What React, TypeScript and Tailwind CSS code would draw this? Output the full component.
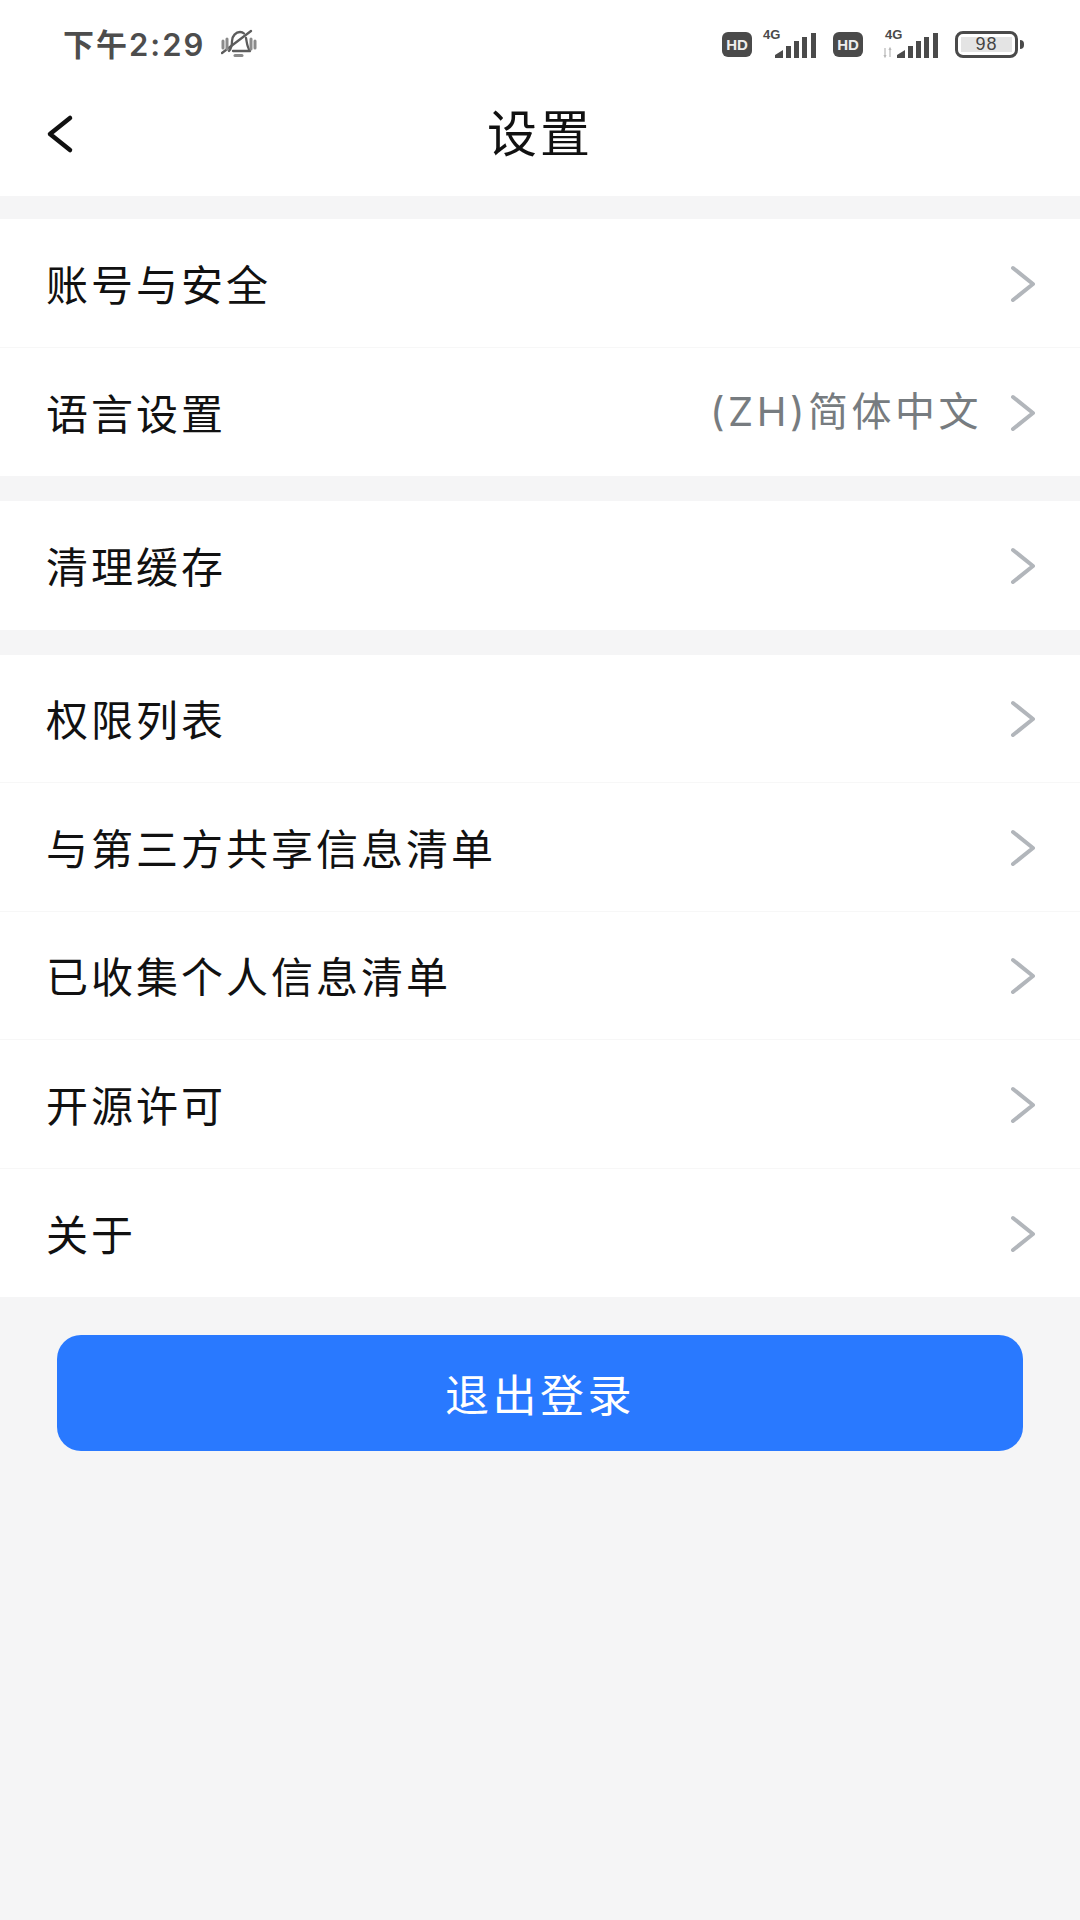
import React from "react";

const FONT = "font-['Noto_Sans_CJK_SC','Noto_Sans',sans-serif]";

interface RowItem {
  label: string;
  value?: string;
}

const sections: RowItem[][] = [
  [{ label: "账号与安全" }, { label: "语言设置", value: "(ZH)简体中文" }],
  [{ label: "清理缓存" }],
  [
    { label: "权限列表" },
    { label: "与第三方共享信息清单" },
    { label: "已收集个人信息清单" },
    { label: "开源许可" },
    { label: "关于" },
  ],
];

function HdBadge() {
  return (
    <span className="flex h-[25px] w-[30px] items-center justify-center rounded-[6px] bg-[#4a4a4a] font-['Liberation_Sans',sans-serif] text-[15px] leading-none font-bold text-[#eeeeee]">
      HD
    </span>
  );
}

function Signal({ arrows }: { arrows?: boolean }) {
  return (
    <svg width="56" height="30" viewBox="0 0 56 30" className="overflow-visible">
      <text x="1" y="10" fontSize="13" fontWeight="700" fill="#4a4a4a" fontFamily="Liberation Sans, sans-serif">
        4G
      </text>
      {arrows && <path d="M1 19v9M0 26l1 2 1-2M6 28v-9M5 21l1-2 1 2" fill="none" stroke="#b8b8b8" strokeWidth="1.200" />}
      <path d="M13 29v-3l8-5v8zM24 29V17h5v12zM32 29V12h5v17zM40 29V8h5v21zM49 29V4h5v25z" fill="#4a4a4a" />
    </svg>
  );
}

function Battery() {
  return (
    <div className="flex items-center gap-[2px]">
      <div className="flex h-[27px] w-[63px] items-center justify-center rounded-[8px] border-[3px] border-[#4a4a4a] p-[3px]">
        <span className="flex h-full w-full items-center justify-center bg-[#e4e4e4] font-['Liberation_Sans',sans-serif] text-[18px] leading-none tracking-[1px] text-[#444444]">
          98
        </span>
      </div>
      <span className="h-[9px] w-[4px] rounded-r-sm bg-[#4a4a4a]" />
    </div>
  );
}

function MuteBell() {
  return (
    <svg width="36" height="30" viewBox="0 0 36 30" fill="none" stroke="#5c5c5c" strokeWidth="2.300" strokeLinecap="round" strokeLinejoin="round">
      <path d="M8 22c3-3 3-6 3-10 0-5 4-9 8-9 2 0 3 .5 4 1.500" />
      <path d="M25 9c1 5 1 9 4 13H12" />
      <path d="M1 24 30 2" />
      <path d="M14 26.500h7" strokeWidth="3" stroke="#8a8a8a" />
      <path d="M2 12v7M6 10v10M30 10v10M34 12v7" strokeWidth="3" stroke="#8a8a8a" />
    </svg>
  );
}

function StatusBar() {
  return (
    <div className="flex h-[88px] items-center justify-between pr-[56px] pl-[63px]">
      <div className="flex items-center gap-[16px]">
        <span className="font-['Inter','Noto_Sans_CJK_SC',sans-serif] text-[31px] leading-none font-semibold tracking-[2px] text-[#4d4d4d]">
          下午2:29
        </span>
        <MuteBell />
      </div>
      <div className="flex items-center">
        <HdBadge />
        <span className="ml-[10px] flex">
          <Signal />
        </span>
        <span className="ml-[15px] flex">
          <HdBadge />
        </span>
        <span className="ml-[21px] flex">
          <Signal arrows />
        </span>
        <span className="ml-[15px] flex">
          <Battery />
        </span>
      </div>
    </div>
  );
}

function Chevron() {
  return (
    <svg width="26" height="38" viewBox="0 0 26 38" fill="none" className="shrink-0">
      <path d="M3 4 23 20 3 36" stroke="#b2b6bb" strokeWidth="4" strokeLinecap="round" strokeLinejoin="round" />
    </svg>
  );
}

function Row({ item, last }: { item: RowItem; last: boolean }) {
  return (
    <div className={`flex h-[128.500px] items-center justify-between pr-[44px] pl-[46px] ${last ? "" : "border-b border-[#f7f7f7]"}`}>
      <span className="text-[42px] leading-none tracking-[3px] text-[#111111]">{item.label}</span>
      <div className="flex items-center gap-[28px]">
        {item.value && (
          <span className="font-['Inter','Noto_Sans_CJK_SC',sans-serif] text-[40px] leading-none tracking-[3.500px] text-[#777c80]">
            {item.value}
          </span>
        )}
        <Chevron />
      </div>
    </div>
  );
}

export default function App() {
  return (
    <div className={`flex h-[1920px] w-[1080px] flex-col bg-[#f5f5f6] ${FONT}`}>
      <header className="h-[196px] bg-white">
        <StatusBar />
        <div className="relative flex h-[90px] items-center justify-center pb-[6px]">
          <svg width="30" height="40" viewBox="0 0 30 40" fill="none" className="absolute top-[26px] left-[45px]">
            <path d="M25 4 5 20l20 16" stroke="#111111" strokeWidth="4.500" strokeLinecap="round" strokeLinejoin="round" />
          </svg>
          <span className="text-[50px] leading-none tracking-[3px] text-[#111111]">设置</span>
        </div>
      </header>

      <main className="mt-[23px] flex flex-col gap-[25px]">
        {sections.map((rows, i) => (
          <section key={i} className="bg-white">
            {rows.map((item, j) => (
              <Row key={item.label} item={item} last={j === rows.length - 1} />
            ))}
          </section>
        ))}
      </main>

      <button className="mx-[57px] mt-[38px] flex h-[116px] items-center justify-center rounded-[24px] bg-[#2979ff] text-[44px] leading-none tracking-[3.500px] text-white">
        退出登录
      </button>
    </div>
  );
}
